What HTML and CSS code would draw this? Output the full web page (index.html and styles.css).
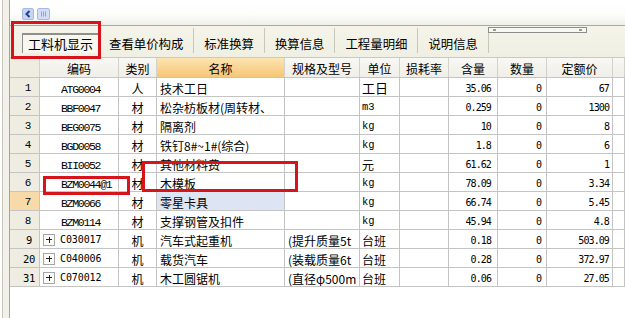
FILE: index.html
```html
<!DOCTYPE html>
<html>
<head>
<meta charset="utf-8">
<link rel="stylesheet" href="styles.css">
</head>
<body>
<div class="app">
  <div class="side"></div>
  <div class="main">
    <div class="top">
      <div class="hscroll">
        <svg class="sb-btn" width="12" height="12" viewBox="0 0 12 12"><rect x="0.5" y="0.5" width="11" height="11" rx="1.5" fill="#c7d5f3" stroke="#a7b9e4"/><path d="M7.5 3 L4.5 6 L7.5 9" fill="none" stroke="#23408f" stroke-width="2"/></svg>
        <svg class="sb-thumb" width="13" height="12" viewBox="0 0 13 12"><rect x="0.5" y="0.5" width="12" height="11" rx="1.5" fill="#d3def6" stroke="#a7b9e4"/><path d="M4.5 3.5 V8.5 M6.5 3.5 V8.5 M8.5 3.5 V8.5" stroke="#8ea3d6" stroke-width="1"/></svg>
      </div>
    </div>
    <div class="tabbar">
      <div class="tab active">工料机显示</div>
      <div class="tab">查看单价构成</div>
      <div class="tab">标准换算</div>
      <div class="tab">换算信息</div>
      <div class="tab">工程量明细</div>
      <div class="tab">说明信息</div>
      <div class="splitter"><span class="dot"></span><span class="dot"></span></div>
    </div>
    <div class="grid">
      <div class="row head">
        <div class="rn"></div><div class="c">编码</div><div class="c">类别</div><div class="c hl">名称</div><div class="c">规格及型号</div><div class="c">单位</div><div class="c">损耗率</div><div class="c">含量</div><div class="c">数量</div><div class="c">定额价</div><div></div>
      </div>
      <div class="row">
        <div class="rn">1</div><div class="code">ATG0004</div><div class="c">人</div><div class="tx">技术工日</div><div class="tx"></div><div class="un big">工日</div><div></div><div class="num q">35.06</div><div class="num n">0</div><div class="num p">67</div><div></div>
      </div>
      <div class="row">
        <div class="rn">2</div><div class="code">BBF0047</div><div class="c">材</div><div class="tx">松杂枋板材(周转材、</div><div class="tx"></div><div class="un lat">m3</div><div></div><div class="num q">0.259</div><div class="num n">0</div><div class="num p">1300</div><div></div>
      </div>
      <div class="row">
        <div class="rn">3</div><div class="code">BEG0075</div><div class="c">材</div><div class="tx">隔离剂</div><div class="tx"></div><div class="un lat">kg</div><div></div><div class="num q">10</div><div class="num n">0</div><div class="num p">8</div><div></div>
      </div>
      <div class="row">
        <div class="rn">4</div><div class="code">BGD0058</div><div class="c">材</div><div class="tx">铁钉8#~1#(综合)</div><div class="tx"></div><div class="un lat">kg</div><div></div><div class="num q">1.8</div><div class="num n">0</div><div class="num p">6</div><div></div>
      </div>
      <div class="row">
        <div class="rn">5</div><div class="code">BII0052</div><div class="c">材</div><div class="tx">其他材料费</div><div class="tx"></div><div class="un">元</div><div></div><div class="num q">61.62</div><div class="num n">0</div><div class="num p">1</div><div></div>
      </div>
      <div class="row">
        <div class="rn">6</div><div class="code">BZM0044@1</div><div class="c">材</div><div class="tx">木模板</div><div class="tx"></div><div class="un lat">kg</div><div></div><div class="num q">78.09</div><div class="num n">0</div><div class="num p">3.34</div><div></div>
      </div>
      <div class="row">
        <div class="rn cur">7</div><div class="code">BZM0066</div><div class="c">材</div><div class="tx sel">零星卡具</div><div class="tx"></div><div class="un lat">kg</div><div></div><div class="num q">66.74</div><div class="num n">0</div><div class="num p">5.45</div><div></div>
      </div>
      <div class="row">
        <div class="rn">8</div><div class="code">BZM0114</div><div class="c">材</div><div class="tx">支撑钢管及扣件</div><div class="tx"></div><div class="un lat">kg</div><div></div><div class="num q">45.94</div><div class="num n">0</div><div class="num p">4.8</div><div></div>
      </div>
      <div class="row">
        <div class="rn m">9</div><div class="mcode"><span class="exp"></span>C030017</div><div class="c">机</div><div class="tx">汽车式起重机</div><div class="tx">(提升质量5t</div><div class="un">台班</div><div></div><div class="num q">0.18</div><div class="num n">0</div><div class="num p">503.09</div><div></div>
      </div>
      <div class="row">
        <div class="rn m">20</div><div class="mcode"><span class="exp"></span>C040006</div><div class="c">机</div><div class="tx">载货汽车</div><div class="tx">(装载质量6t</div><div class="un">台班</div><div></div><div class="num q">0.28</div><div class="num n">0</div><div class="num p">372.97</div><div></div>
      </div>
      <div class="row">
        <div class="rn m">31</div><div class="mcode"><span class="exp"></span>C070012</div><div class="c">机</div><div class="tx">木工圆锯机</div><div class="tx">(直径φ500m</div><div class="un">台班</div><div></div><div class="num q">0.06</div><div class="num n">0</div><div class="num p">27.05</div><div></div>
      </div>
    </div>
  </div>
</div>
<div class="mark mark-tab"></div>
<div class="mark mark-code"></div>
<div class="mark mark-name"></div>
</body>
</html>
```

FILE: styles.css
```css
* { box-sizing: border-box; margin: 0; padding: 0; }
html, body { width: 625px; height: 318px; overflow: hidden; background: #fff; }
body {
  position: relative;
  font-family: "Noto Sans CJK SC", "Liberation Sans", sans-serif;
  font-size: 12px;
  color: #000;
}
.app { display: flex; height: 318px; }
.side {
  flex: none;
  width: 8px;
  margin-left: 2px;
  border-left: 1px solid #cac8be;
  border-right: 1px solid #a3a3a3;
  background: #f2f1e9;
}
.main { flex: 1; min-width: 0; display: flex; flex-direction: column; }

.top {
  height: 26px;
  border-bottom: 1px solid #a9a8a2;
  background: linear-gradient(#ffffff, #fdfdfb 55%, #f0f0ea);
  padding: 8px 0 0 12px;
}
.hscroll { display: flex; gap: 3px; height: 12px; }
.sb-btn, .sb-thumb { display: block; }

.tabbar {
  position: relative;
  height: 31px;
  background: linear-gradient(#f5f4ea, #f0efe3);
  display: flex;
  align-items: flex-end;
  padding: 0 0 4px 12px;
}
.tab {
  height: 25px;
  display: flex;
  align-items: flex-end;
  line-height: 18px;
  font-size: 12.4px;
  padding: 0 10px;
  border-right: 1px solid #c9c7b9;
  white-space: nowrap;
}
.tab.active {
  height: 20px;
  padding: 0 5px;
  border-top: 2px solid #8f8f8c;
  border-left: 1px solid #8f8f8c;
  border-right: 1px solid #ffffff;
  background: #f7f6ef;
  font-size: 13px;
}
.splitter {
  position: absolute;
  left: 478px;
  top: 1px;
  width: 99px;
  height: 6px;
  border: 1px solid #8d8d8a;
  background: #f7f7f3;
  display: flex;
  justify-content: space-between;
  padding: 1px 4px;
}
.dot { width: 3px; height: 2px; background: #9a9a96; }

.grid { display: flex; flex-direction: column; }
.row {
  display: grid;
  grid-template-columns: 30px 79px 38px 128px 75px 40px 49px 49px 49px 66px 1fr;
  height: 19px;
  border-bottom: 1px solid #c4c4c4;
}
.row > div {
  border-right: 1px solid #c4c4c4;
  overflow: hidden;
  white-space: nowrap;
  line-height: 21px;
}
.row.head {
  height: 21px;
  border-top: 1px solid #c9c9c3;
  background: linear-gradient(#f8f8f4, #efeee8);
}
.row.head > div { line-height: 21px; border-right-color: #d2d2cc; }
.row.head .hl { background: linear-gradient(#fde4b2, #f6c676); }

.rn {
  background: #efede1;
  text-align: center;
  padding-left: 7px;
  font-family: "Liberation Mono", monospace;
  font-size: 11px;
}
.rn.m { font-family: "DejaVu Sans Mono", monospace; font-size: 10.5px; letter-spacing: -0.3px; padding-left: 9px; }
.rn.cur { background: #f8d9a8; }
.c { text-align: center; }
.tx { padding-left: 3px; }
.tx.sel { background: #dde5f5; }
.code {
  padding: 1px 0 0 21px;
  font-family: "Liberation Mono", monospace;
  font-size: 11.5px;
  letter-spacing: -1.3px;
}
.mcode {
  display: flex;
  align-items: center;
  gap: 5px;
  padding: 1px 0 0 3px;
  font-family: "DejaVu Sans Mono", monospace;
  font-size: 10px;
  letter-spacing: -0.1px;
}
.exp {
  position: relative;
  flex: none;
  width: 12px;
  height: 12px;
  border: 1px solid #a6a6a6;
  background: #fbfbf8;
}
.exp::before, .exp::after {
  content: "";
  position: absolute;
  background: #222;
}
.exp::before { left: 2px; top: 4.5px; width: 6px; height: 1px; }
.exp::after { left: 4.5px; top: 2px; width: 1px; height: 6px; }
.un { padding-left: 2px; }
.row > .un.big { font-size: 13px; line-height: 19px; }
.un.lat { font-family: "Liberation Mono", monospace; font-size: 10.5px; }
.num {
  text-align: right;
  font-family: "DejaVu Sans Mono", monospace;
  font-size: 10px;
  letter-spacing: -0.9px;
}
.num.q { padding-right: 6px; }
.num.n { padding-right: 5px; }
.num.p { padding-right: 3px; }

.mark { position: absolute; border: 3px solid #d7141c; }
.mark-tab { left: 11px; top: 21px; width: 90px; height: 38px; }
.mark-code { left: 43px; top: 176px; width: 87px; height: 19px; }
.mark-name { left: 142px; top: 161px; width: 156px; height: 31px; }
```
